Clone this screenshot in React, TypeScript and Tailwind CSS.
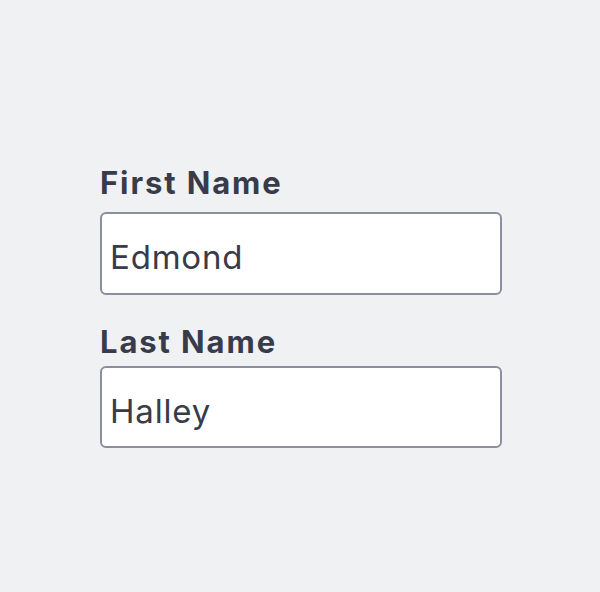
import React from "react";

function Field({ label, value, mt, h }: { label: string; value: string; mt: string; h: string }) {
  return (
    <div className={`flex flex-col ${mt}`}>
      <label className="text-[31px] font-bold leading-[38px] tracking-[1.9px] text-[#373b4a]">{label}</label>
      <div className={`flex w-[402px] items-center rounded-[6px] border-2 border-[#8a8fa0] bg-white pl-[8px] pt-[8px] ${h}`}>
        <span className="text-[33px] leading-none tracking-[0.8px] text-[#373b4a]">{value}</span>
      </div>
    </div>
  );
}

export default function App() {
  return (
    <div
      className="h-[592px] w-[600px] bg-[#f0f1f3] pl-[100px] pt-[164px]"
      style={{ fontFamily: "Inter, 'Open Sans', sans-serif" }}
    >
      <Field label="First Name" value="Edmond" mt="" h="mt-[10px] h-[83px]" />
      <Field label="Last Name" value="Halley" mt="mt-[28px]" h="mt-[5px] h-[82px]" />
    </div>
  );
}
